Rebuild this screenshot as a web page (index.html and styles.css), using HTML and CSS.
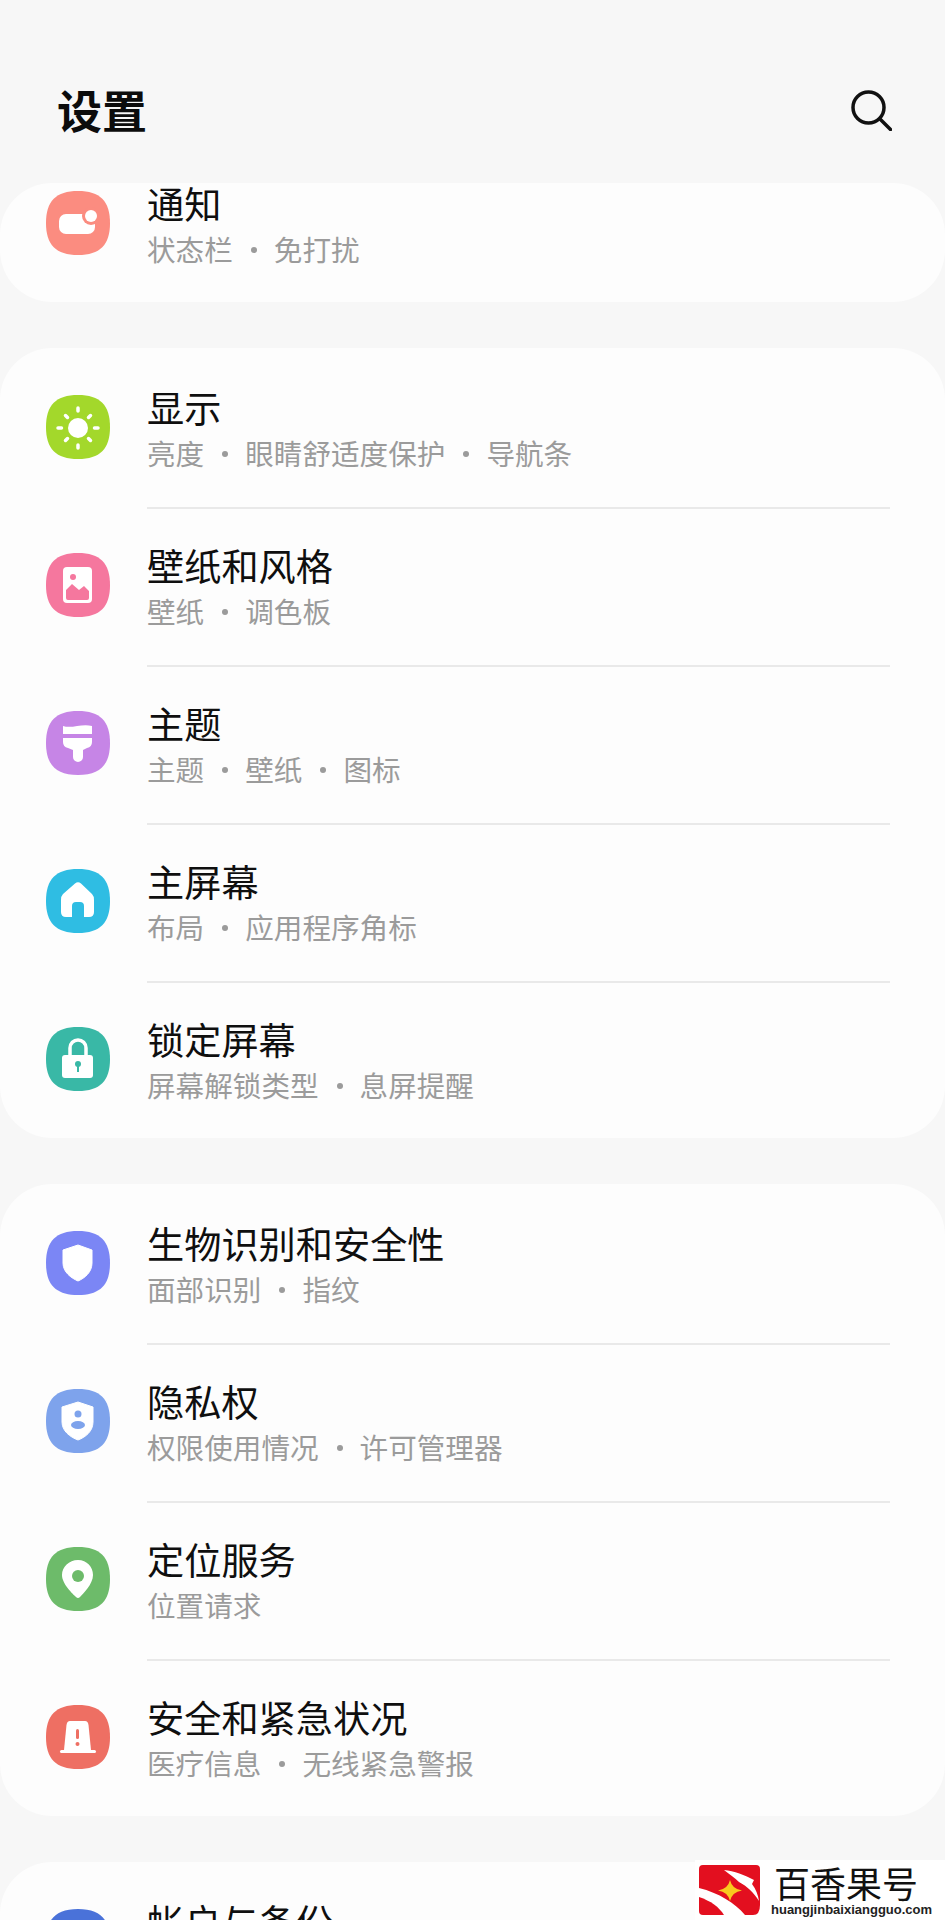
FILE: index.html
```html
<!DOCTYPE html>
<html lang="zh-CN">
<head>
  <meta charset="UTF-8" />
  <meta name="viewport" content="width=device-width, initial-scale=1.0"/>
  <title>设置</title>
  <link rel="stylesheet" href="styles.css">
</head>

<body>
  <svg class="defs" width="0" height="0">
    <symbol id="squircle" viewBox="0 0 64 64">
      <path d="M32 0C54 0 64 10 64 32C64 54 54 64 32 64C10 64 0 54 0 32C0 10 10 0 32 0Z" fill="currentColor"/>
    </symbol>
  </svg>

  <header class="cabecera">
    <h1 class="titulo">设置</h1>
    <svg class="buscar" viewBox="0 0 41 41" fill="none" stroke="#111" stroke-width="3.5" stroke-linecap="round">
      <circle cx="17.500" cy="17.500" r="15.500"/>
      <path d="M29 29L39.500 39.500"/>
    </svg>
  </header>

  <main class="lista">
    <!-- la primera tarjeta está cortada por el scroll -->
    <section class="tarjeta tarjeta-cortada">
      <div class="fila">
        <svg class="icono" viewBox="0 0 64 64" style="color:#fb8c80">
          <use href="#squircle"/>
          <rect x="13" y="23" width="36" height="20" rx="7" fill="#fff"/>
          <circle cx="45" cy="25" r="9" fill="#fb8c80"/>
          <circle cx="45" cy="25" r="6" fill="#fff"/>
        </svg>
        <div class="textos">
          <div class="nombre">通知</div>
          <div class="detalle"><span>状态栏</span><span>免打扰</span></div>
        </div>
      </div>
    </section>

    <section class="tarjeta">
      <div class="fila">
        <svg class="icono" viewBox="0 0 64 64" style="color:#a3d82b">
          <use href="#squircle"/>
          <circle cx="32" cy="33" r="10" fill="#fff"/>
          <g stroke="#fff" stroke-width="3.5" stroke-linecap="round">
            <path d="M32 13V16M32 50V53M12 33H15.500M48.500 33H52M19.500 20.500L21.500 22.500M42.500 43.500L44.500 45.500M19.500 45.500L21.500 43.500M42.500 22.500L44.500 20.500"/>
          </g>
        </svg>
        <div class="textos">
          <div class="nombre">显示</div>
          <div class="detalle"><span>亮度</span><span>眼睛舒适度保护</span><span>导航条</span></div>
        </div>
      </div>
      <div class="fila">
        <svg class="icono" viewBox="0 0 64 64" style="color:#f5779e">
          <use href="#squircle"/>
          <rect x="17" y="14" width="29" height="36" rx="4" fill="#fff"/>
          <circle cx="27" cy="24" r="3" fill="#f5779e"/>
          <path d="M20 37L26 31L33 37L38 33L43 38V45Q43 47 41 47H22Q20 47 20 45Z" fill="#f5779e"/>
        </svg>
        <div class="textos">
          <div class="nombre">壁纸和风格</div>
          <div class="detalle"><span>壁纸</span><span>调色板</span></div>
        </div>
      </div>
      <div class="fila">
        <svg class="icono" viewBox="0 0 64 64" style="color:#c685e6">
          <use href="#squircle"/>
          <path d="M17 15C26 18 36 12 46 15V23H17Z" fill="#fff"/>
          <path d="M17 27H46V31Q46 36 41 37L37 39V46A5 5 0 0 1 27 46V39L22 37Q17 36 17 31Z" fill="#fff"/>
        </svg>
        <div class="textos">
          <div class="nombre">主题</div>
          <div class="detalle"><span>主题</span><span>壁纸</span><span>图标</span></div>
        </div>
      </div>
      <div class="fila">
        <svg class="icono" viewBox="0 0 64 64" style="color:#2fbde3">
          <use href="#squircle"/>
          <path fill-rule="evenodd" d="M29 14.500Q32 12 35 14.500L46 25Q48 27 48 31V43Q48 48 43 48H38V37Q38 33 34 33H30Q26 33 26 37V48H20Q15 48 15 43V31Q15 27 17 25Z" fill="#fff"/>
        </svg>
        <div class="textos">
          <div class="nombre">主屏幕</div>
          <div class="detalle"><span>布局</span><span>应用程序角标</span></div>
        </div>
      </div>
      <div class="fila">
        <svg class="icono" viewBox="0 0 64 64" style="color:#39b8a6">
          <use href="#squircle"/>
          <path d="M24 29V21A8 8 0 0 1 40 21V29" fill="none" stroke="#fff" stroke-width="3.500"/>
          <rect x="16" y="28" width="31" height="23" rx="3" fill="#fff"/>
          <circle cx="32" cy="37" r="3" fill="#39b8a6"/>
          <rect x="31" y="37" width="2" height="8" fill="#39b8a6"/>
        </svg>
        <div class="textos">
          <div class="nombre">锁定屏幕</div>
          <div class="detalle"><span>屏幕解锁类型</span><span>息屏提醒</span></div>
        </div>
      </div>
    </section>

    <section class="tarjeta">
      <div class="fila">
        <svg class="icono" viewBox="0 0 64 64" style="color:#7b86f5">
          <use href="#squircle"/>
          <path d="M32 14L46 19V32C46 41 39 47 32 50C25 47 17 41 17 32V19Z" fill="#fff" stroke="#fff" stroke-linejoin="round"/>
        </svg>
        <div class="textos">
          <div class="nombre">生物识别和安全性</div>
          <div class="detalle"><span>面部识别</span><span>指纹</span></div>
        </div>
      </div>
      <div class="fila">
        <svg class="icono" viewBox="0 0 64 64" style="color:#7ea3ec">
          <use href="#squircle"/>
          <path d="M32 13L47 18V33C47 42 40 48 32 51C24 48 16 42 16 33V18Z" fill="#fff" stroke="#fff" stroke-linejoin="round"/>
          <circle cx="32" cy="25" r="3.500" fill="#7ea3ec"/>
          <ellipse cx="32" cy="36" rx="7" ry="4" fill="#7ea3ec"/>
        </svg>
        <div class="textos">
          <div class="nombre">隐私权</div>
          <div class="detalle"><span>权限使用情况</span><span>许可管理器</span></div>
        </div>
      </div>
      <div class="fila">
        <svg class="icono" viewBox="0 0 64 64" style="color:#6dbb6a">
          <use href="#squircle"/>
          <path fill-rule="evenodd" d="M32 13C41 13 47 20 47 28C47 37 37 47 34 50Q32 52 30 50C27 47 16 37 16 28C16 20 23 13 32 13Z" fill="#fff"/>
          <circle cx="32" cy="29" r="6" fill="#6dbb6a"/>
        </svg>
        <div class="textos">
          <div class="nombre">定位服务</div>
          <div class="detalle"><span>位置请求</span></div>
        </div>
      </div>
      <div class="fila">
        <svg class="icono" viewBox="0 0 64 64" style="color:#ee6f63">
          <use href="#squircle"/>
          <path d="M24 16H39Q42 16 42.500 20L45 45H18L20.500 20Q21 16 24 16Z" fill="#fff"/>
          <rect x="14" y="45" width="36" height="3" rx="1.500" fill="#fff"/>
          <rect x="30" y="24" width="3" height="10" rx="1.500" fill="#ee6f63"/>
          <circle cx="31.500" cy="39" r="2" fill="#ee6f63"/>
        </svg>
        <div class="textos">
          <div class="nombre">安全和紧急状况</div>
          <div class="detalle"><span>医疗信息</span><span>无线紧急警报</span></div>
        </div>
      </div>
    </section>

    <section class="tarjeta">
      <div class="fila fila-final">
        <svg class="icono" viewBox="0 0 64 64" style="color:#4a72d9">
          <use href="#squircle"/>
        </svg>
        <div class="textos">
          <div class="nombre">帐户与备份</div>
        </div>
      </div>
    </section>
  </main>

  <!-- marca de agua -->
  <div class="marca">
    <svg class="marca-logo" viewBox="0 0 61 50">
      <path d="M4 0H57Q61 0 61 4V40Q61 50 54 50H46C36 38 20 28 0 23V4Q0 0 4 0Z" fill="#e30f1f"/>
      <path d="M0 32C12 36 20 42 25 50H4Q0 50 0 46Z" fill="#e30f1f"/>
      <path d="M25 5C35 6 46 10 55 15L53 19C57 24 59 30 60 36C55 28 48 21 40 17C36 13 30 9 25 5Z" fill="#fff"/>
      <path d="M31 15Q33 24 43 25.500Q33 27 31 36Q29 27 19 25.500Q29 24 31 15Z" fill="#f9c91e"/>
    </svg>
    <div class="marca-textos">
      <div class="marca-nombre">百香果号</div>
      <div class="marca-url">huangjinbaixiangguo.com</div>
    </div>
  </div>
</body>
</html>
```

FILE: styles.css
```css
html, body {
  margin: 0;
  height: 1920px;
  overflow: hidden;
}

body {
  position: relative;
  font-family: "Noto Sans CJK SC", "Noto Sans", sans-serif;
  background: #f7f7f7;
  color: #111;
}

.defs {
  display: block;
}

.cabecera {
  display: flex;
  justify-content: space-between;
  align-items: flex-start;
  height: 183px;
  padding: 85px 53px 0 57px;
  box-sizing: border-box;
}

.titulo {
  margin: 0;
  font-size: 45px;
  line-height: 50px;
  font-weight: 700;
  color: #0c0c0c;
}

.buscar {
  width: 41px;
  height: 41px;
  margin-top: 5px;
}

.tarjeta {
  background: #fdfdfd;
  border-radius: 52px;
  margin-bottom: 46px;
}

.tarjeta-cortada {
  height: 119px;
  overflow: hidden;
}

.tarjeta-cortada .fila {
  margin-top: -39px;
}

.fila {
  display: flex;
  align-items: center;
  height: 158px;
  padding: 0 55px 0 46px;
}

.icono {
  flex: none;
  width: 64px;
  height: 64px;
  margin-right: 37px;
}

.textos {
  flex: 1;
  align-self: stretch;
  display: flex;
  flex-direction: column;
  justify-content: center;
  margin-bottom: -3px;
  border-bottom: 2px solid #e9e9e9;
}

.fila:last-child .textos {
  border-bottom-color: transparent;
}

.fila-final .textos {
  justify-content: flex-start;
  padding-top: 34px;
}

.nombre {
  font-size: 37.200px;
  line-height: 50px;
  margin-bottom: 1px;
  color: #0f0f0f;
}

.detalle {
  display: flex;
  font-size: 28.600px;
  line-height: 40px;
  color: #9b9b9b;
}

.detalle span + span {
  margin-left: 41px;
  position: relative;
}

.detalle span + span::before {
  content: "";
  position: absolute;
  left: -23px;
  top: 18px;
  width: 6px;
  height: 6px;
  border-radius: 50%;
  background: #9b9b9b;
}

.marca {
  position: absolute;
  right: 0;
  bottom: 0;
  width: 250px;
  height: 60px;
  display: flex;
  align-items: center;
  gap: 14px;
  padding-left: 4px;
  box-sizing: border-box;
  background: #fff;
}

.marca-logo {
  flex: none;
  width: 61px;
  height: 50px;
}

.marca-textos {
  margin-left: -3px;
}

.marca-nombre {
  font-size: 36px;
  line-height: 36px;
  padding-left: 3px;
  margin-bottom: 3px;
  color: #111;
}

.marca-url {
  font-family: "Liberation Sans", sans-serif;
  font-size: 13px;
  line-height: 14px;
  font-weight: 700;
  color: #222;
}
```
